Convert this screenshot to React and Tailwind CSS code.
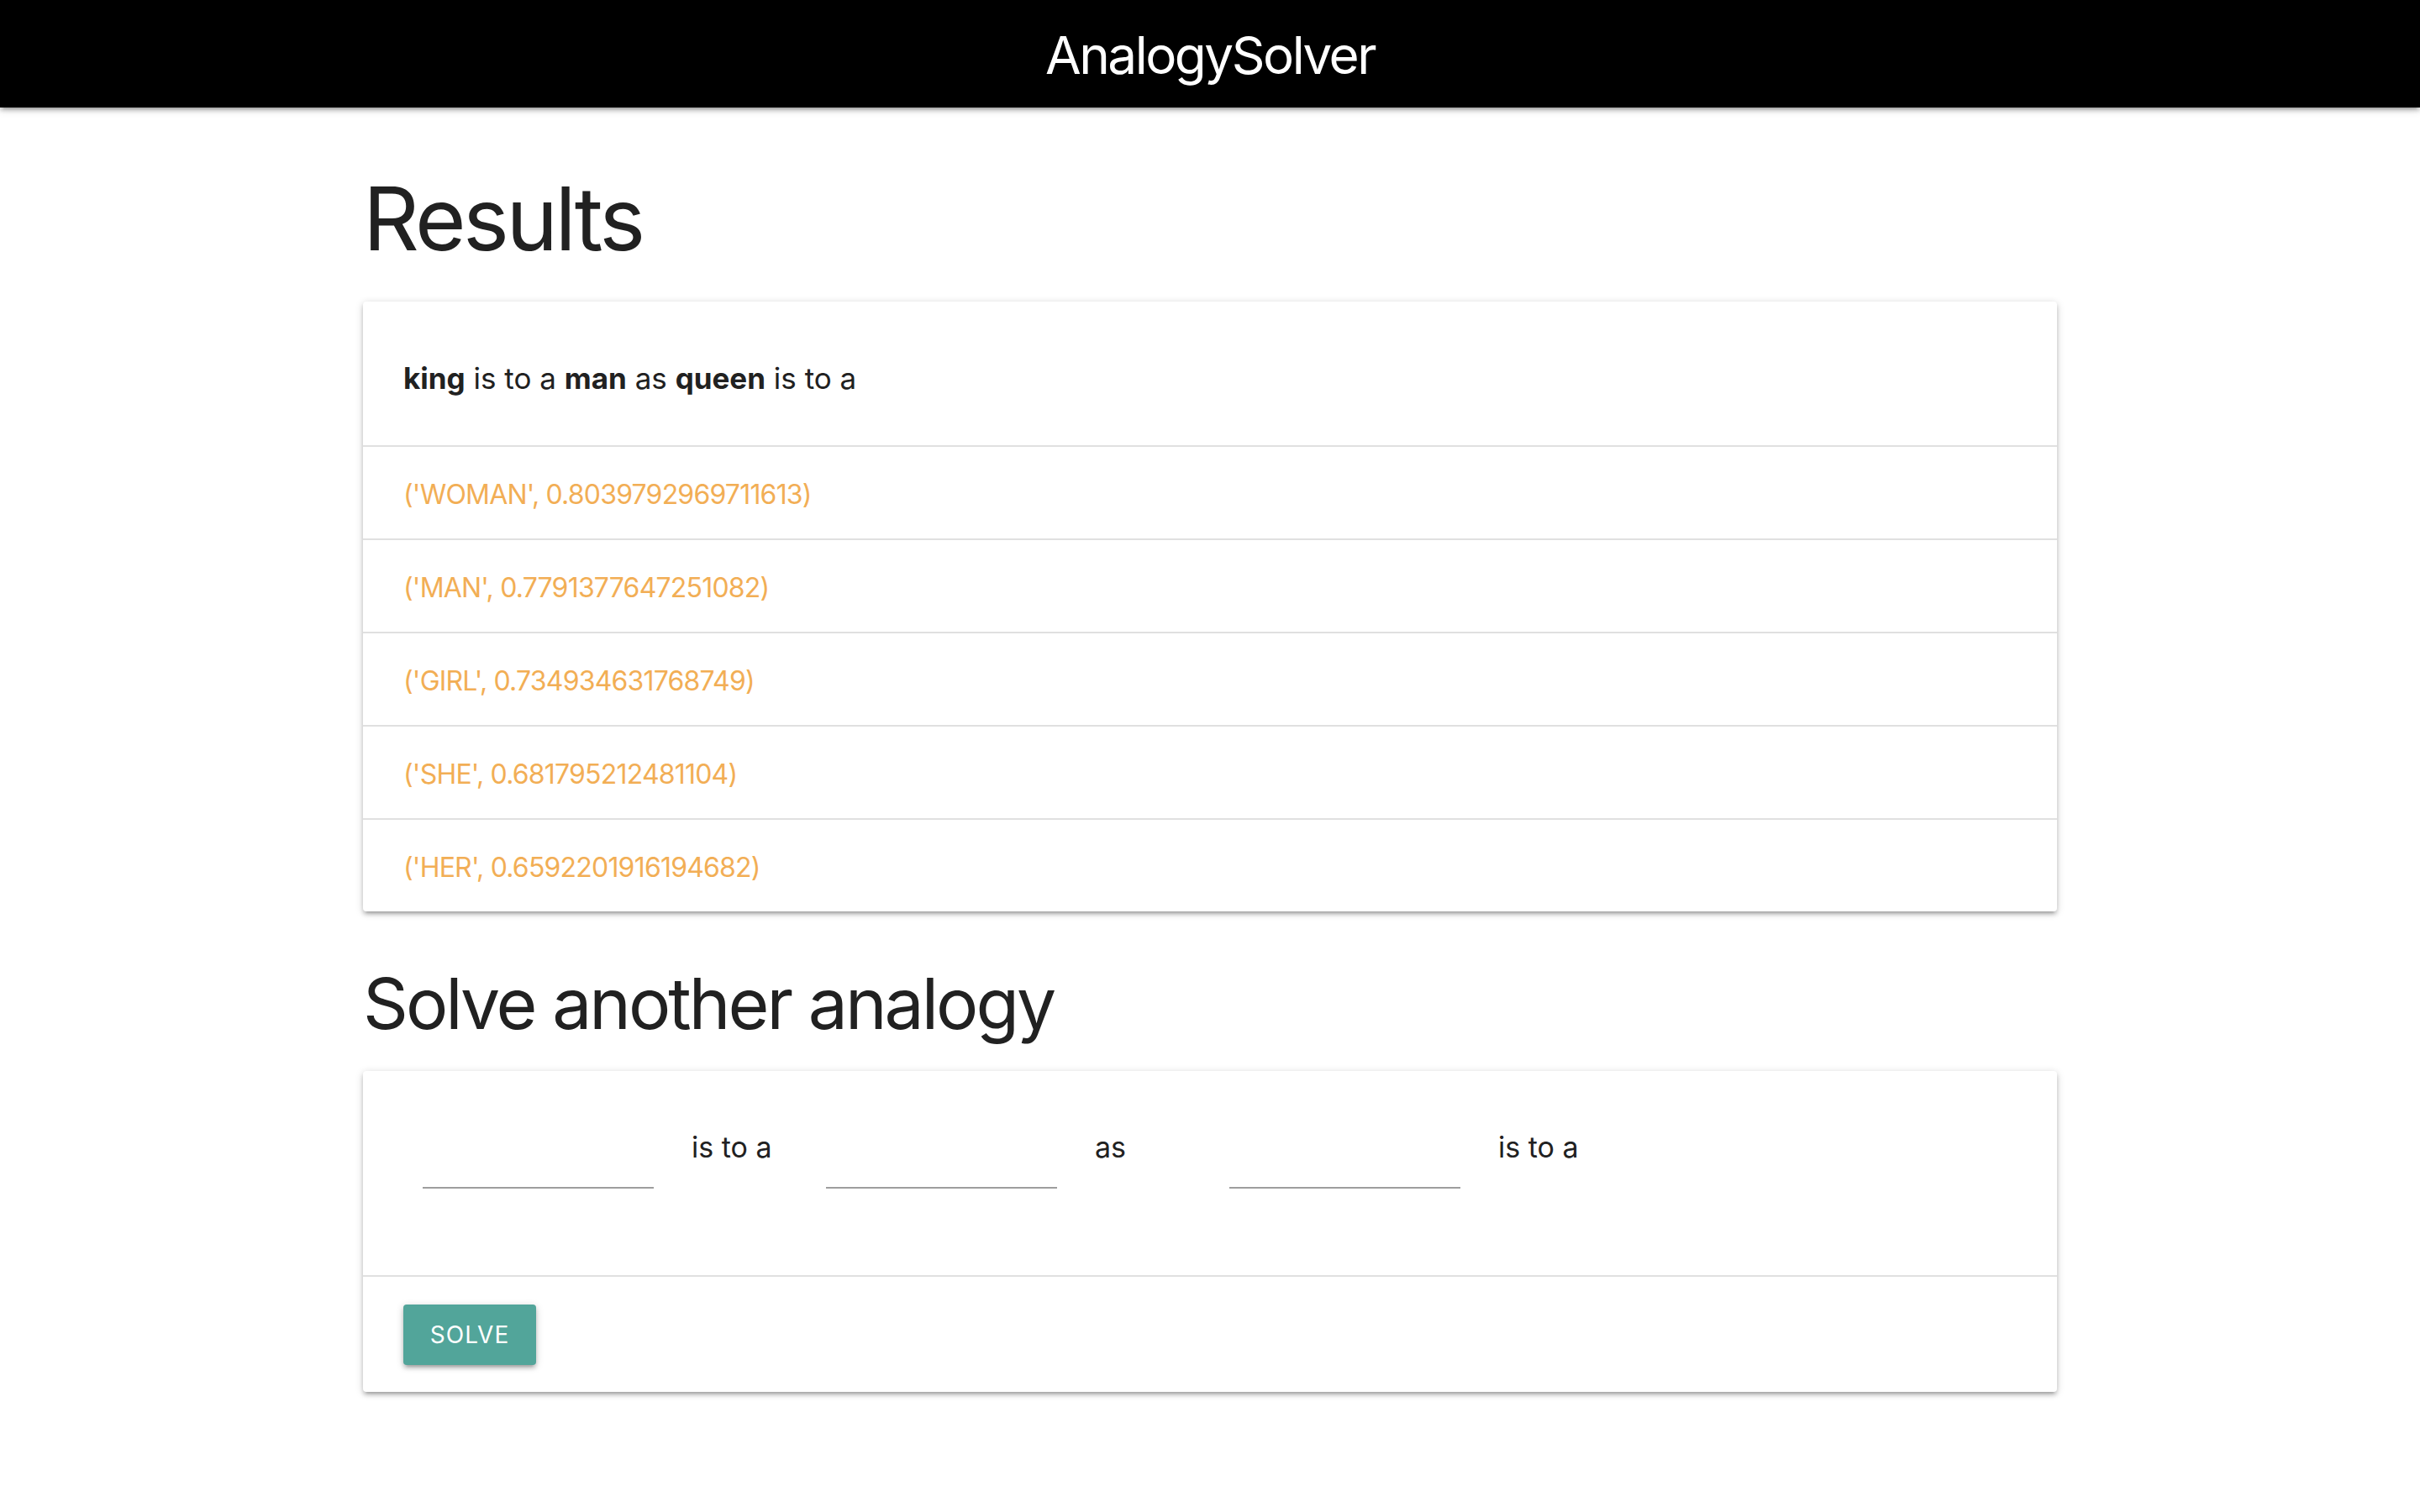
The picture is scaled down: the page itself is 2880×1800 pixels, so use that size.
import React from "react";

const results = [
  "('WOMAN', 0.8039792969711613)",
  "('MAN', 0.7791377647251082)",
  "('GIRL', 0.734934631768749)",
  "('SHE', 0.681795212481104)",
  "('HER', 0.6592201916194682)",
];

const cardShadow =
  "shadow-[0_4px_4px_0_rgba(0,0,0,0.14),0_6px_2px_-4px_rgba(0,0,0,0.12),0_2px_10px_0_rgba(0,0,0,0.2)]";

function Blank() {
  return (
    <div className="w-[320px] shrink-0">
      <div className="h-[96px] w-[275px] border-b-2 border-[#9e9e9e]" />
    </div>
  );
}

function Label({ children }) {
  return (
    <div className="w-[160px] shrink-0 pt-[23px] text-[34px] leading-[48px] text-[#212121]">
      {children}
    </div>
  );
}

export default function App() {
  return (
    <div className="min-h-[1800px] bg-white font-['Inter',sans-serif] text-[#212121]">
      <header className="relative z-10 flex h-[128px] items-center justify-center bg-black shadow-[0_4px_4px_0_rgba(0,0,0,0.14),0_6px_2px_-4px_rgba(0,0,0,0.12),0_2px_10px_0_rgba(0,0,0,0.2)]">
        <span className="pt-[3px] text-[62px] leading-[125px] tracking-[-2.5px] text-white">
          AnalogySolver
        </span>
      </header>

      <main className="mx-auto w-[2016px]">
        <h1 className="mt-[75px] mb-[42px] text-[104px] leading-[114px] tracking-[-3.5px]">
          Results
        </h1>

        <div className={`rounded-[4px] bg-white ${cardShadow}`}>
          <div className="border-b-2 border-[#e0e0e0] pl-[48px] pt-[67px] pb-[56px] text-[35px] leading-[48px]">
            <span className="font-bold">king</span> is to a{" "}
            <span className="font-bold">man</span> as{" "}
            <span className="font-bold">queen</span> is to a
          </div>
          {results.map((r, i) => (
            <div
              key={r}
              className={`pl-[48px] pt-[33px] pb-[28px] text-[32px] leading-[48px] tracking-[-0.8px] text-[#f2ae55] ${
                i < results.length - 1 ? "border-b-2 border-[#e0e0e0]" : ""
              }`}
            >
              {r}
            </div>
          ))}
        </div>

        <h2 className="mt-[64px] mb-[34px] text-[84px] leading-[92px] tracking-[-3px]">
          Solve another analogy
        </h2>

        <div className={`rounded-[4px] bg-white ${cardShadow}`}>
          <div className="flex border-b-2 border-[#e0e0e0] pl-[71px] pt-[44px] pb-[103px]">
            <Blank />
            <Label>is to a</Label>
            <Blank />
            <Label>as</Label>
            <Blank />
            <Label>is to a</Label>
          </div>
          <div className="pl-[48px] pt-[33px] pb-[32px]">
            <button className="flex h-[72px] w-[158px] items-center justify-center rounded-[4px] bg-[#52a59a] text-[28px] tracking-[1px] text-white shadow-[0_4px_4px_0_rgba(0,0,0,0.14),0_6px_2px_-4px_rgba(0,0,0,0.12),0_2px_10px_0_rgba(0,0,0,0.2)]">
              SOLVE
            </button>
          </div>
        </div>
      </main>
    </div>
  );
}
